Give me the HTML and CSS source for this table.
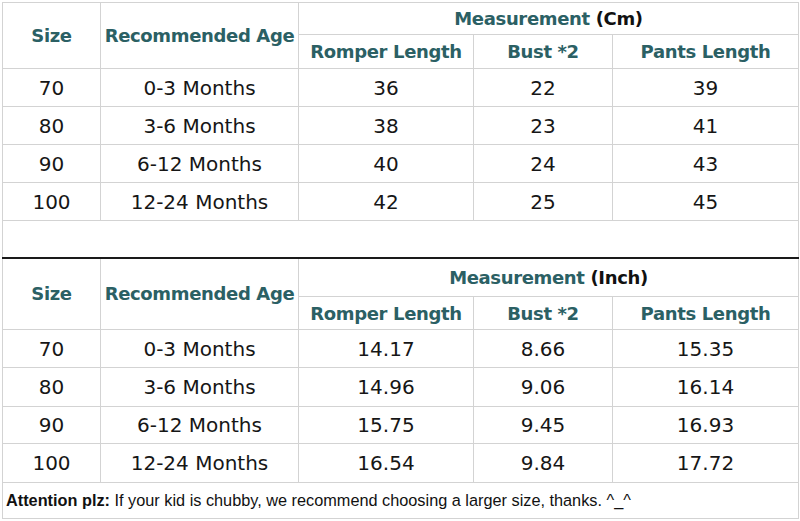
FILE: index.html
```html
<!DOCTYPE html>
<html>
<head>
<meta charset="utf-8">
<link rel="stylesheet" href="styles.css">
</head>
<body>
<div class="sheet">
<table class="chart">
  <colgroup>
    <col class="c1"><col class="c2"><col class="c3"><col class="c4"><col class="c5">
  </colgroup>
  <tr class="h1a">
    <th rowspan="2">Size</th>
    <th rowspan="2">Recommended Age</th>
    <th colspan="3" class="meas">Measurement <span class="unit">(Cm)</span></th>
  </tr>
  <tr class="h1b">
    <th>Romper Length</th><th>Bust *2</th><th>Pants Length</th>
  </tr>
  <tr class="row"><td>70</td><td>0-3 Months</td><td>36</td><td>22</td><td>39</td></tr>
  <tr class="row"><td>80</td><td>3-6 Months</td><td>38</td><td>23</td><td>41</td></tr>
  <tr class="row"><td>90</td><td>6-12 Months</td><td>40</td><td>24</td><td>43</td></tr>
  <tr class="row"><td>100</td><td>12-24 Months</td><td>42</td><td>25</td><td>45</td></tr>
  <tr class="gap"><td colspan="5"></td></tr>
  <tr class="h2a">
    <th rowspan="2">Size</th>
    <th rowspan="2">Recommended Age</th>
    <th colspan="3" class="meas">Measurement <span class="unit">(Inch)</span></th>
  </tr>
  <tr class="h2b">
    <th>Romper Length</th><th>Bust *2</th><th>Pants Length</th>
  </tr>
  <tr class="row"><td>70</td><td>0-3 Months</td><td>14.17</td><td>8.66</td><td>15.35</td></tr>
  <tr class="row r2"><td>80</td><td>3-6 Months</td><td>14.96</td><td>9.06</td><td>16.14</td></tr>
  <tr class="row r3"><td>90</td><td>6-12 Months</td><td>15.75</td><td>9.45</td><td>16.93</td></tr>
  <tr class="row r2"><td>100</td><td>12-24 Months</td><td>16.54</td><td>9.84</td><td>17.72</td></tr>
  <tr class="note"><td colspan="5"><b>Attention plz:</b> If your kid is chubby, we recommend choosing a larger size, thanks. ^_^</td></tr>
</table>
</div>
</body>
</html>
```
FILE: styles.css
```css
html, body {
  margin: 0;
  padding: 0;
  background: #ffffff;
}
.sheet {
  padding: 2px 2px 0 2px;
}
.chart {
  border-collapse: collapse;
  table-layout: fixed;
  width: 796px;
  font-family: "DejaVu Sans", Verdana, sans-serif;
  color: #161616;
}
.c1 { width: 98px; }
.c2 { width: 198px; }
.c3 { width: 175px; }
.c4 { width: 139px; }
.c5 { width: 186px; }
.chart th, .chart td {
  border: 1px solid #d3d3d3;
  padding: 0;
  text-align: center;
  vertical-align: middle;
  white-space: nowrap;
  overflow: hidden;
}
.chart th {
  font-size: 18px;
  font-weight: bold;
  color: #2b6064;
  letter-spacing: -0.35px;
}
.chart td {
  font-size: 20px;
}
.unit {
  color: #111;
}
.h1a { height: 32px; }
.h1b { height: 34px; }
.row { height: 38px; }
.h2a { height: 39px; }
.h2b { height: 33px; }
.r2 { height: 39px; }
.r3 { height: 37px; }
.gap { height: 37px; }
.gap td { border-bottom: 2px solid #1a1a1a; }
.note { height: 36px; }
.note td {
  text-align: left;
  padding-left: 3px;
  font-family: "Liberation Sans", Arial, sans-serif;
  font-size: 16.3px;
  color: #111;
}
.note b { font-weight: bold; }
```
